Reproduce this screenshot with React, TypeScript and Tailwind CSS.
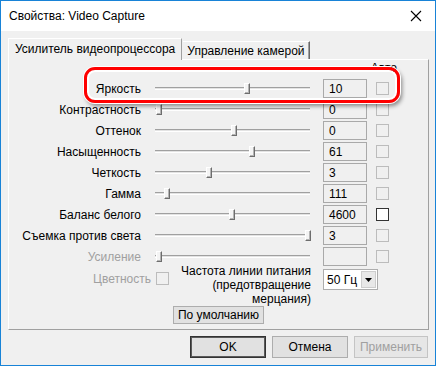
import React from 'react';

type Row = { label: string; value: string; pos: number; disabled?: boolean; white?: boolean };

// pos = thumb offset from track start, px
const rows: Row[] = [
  { label: 'Яркость', value: '10', pos: 89 },
  { label: 'Контрастность', value: '0', pos: 1 },
  { label: 'Оттенок', value: '0', pos: 76 },
  { label: 'Насыщенность', value: '61', pos: 94 },
  { label: 'Четкость', value: '3', pos: 51 },
  { label: 'Гамма', value: '111', pos: 9 },
  { label: 'Баланс белого', value: '4600', pos: 74, white: true },
  { label: 'Съемка против света', value: '3', pos: 150 },
  { label: 'Усиление', value: '', pos: 1, disabled: true },
];

function Slider({ pos }: { pos: number }) {
  return (
    <div className="relative ml-[13px] w-[155px] h-[21px] flex items-center">
      <div className="w-full h-[3px] border-t border-t-[#a0a0a0] border-b border-b-white bg-[#e3e3e3]" />
      <div
        className="absolute top-[5px] w-[6px] h-[11px] bg-[#f4f4f4] border-l border-t border-l-white border-t-white border-r border-b border-r-[#6d6d6d] border-b-[#6d6d6d] shadow-[inset_-1px_-1px_0_#b4b4b4]"
        style={{ left: pos }}
      />
    </div>
  );
}

function Check({ white }: { white?: boolean }) {
  return (
    <div
      className={
        white
          ? 'w-[13px] h-[13px] border border-[#333] bg-white'
          : 'w-[13px] h-[13px] border border-[#bcbcbc] bg-[#f0f0f0]'
      }
    />
  );
}

export default function App() {
  return (
    <div
      className="w-[436px] h-[366px] border border-[#1883d7] flex flex-col bg-[#f0f0f0] text-[12px] text-black"
      style={{ fontFamily: '"Liberation Sans", Arial, sans-serif' }}
    >
      {/* Title bar */}
      <div className="h-[30px] bg-white flex items-center justify-between pl-[8px] pr-[9px] shrink-0">
        <span className="text-[12px]">Свойства: Video Capture</span>
        <svg width="12" height="12" viewBox="0 0 12 12" className="mr-[4px]">
          <path d="M1 1 L11 11 M11 1 L1 11" stroke="#000" strokeWidth="1.1" />
        </svg>
      </div>

      <div className="flex-1 flex flex-col px-[7px] pt-[6px]">
        {/* Tabs */}
        <div className="flex items-end h-[22px] relative z-10">
          <div className="h-[22px] px-[6px] flex items-center bg-[#f0f0f0] border-l border-t border-l-white border-t-white border-r border-r-[#a0a0a0] -mb-px pb-px">
            Усилитель видеопроцессора
          </div>
          <div className="h-[18px] ml-[1px] px-[4px] flex items-center border-t border-t-white border-r border-r-[#696969] shadow-[inset_-1px_0_0_#a0a0a0]">
            Управление камерой
          </div>
        </div>

        {/* Panel */}
        <div className="relative w-[421px] h-[271px] border-l border-t border-l-white border-t-white border-r border-b border-r-[#a0a0a0] border-b-[#a0a0a0] flex flex-col">
          <div className="h-[18px] flex justify-end pr-[31px] leading-[14px]">
            <span className="mt-[1px]">Авто</span>
          </div>

          <div className="flex flex-col">
            {rows.map((r) => (
              <div key={r.label} className="h-[21px] flex items-center">
                <div className={'w-[133px] text-right pr-[1px] ' + (r.disabled ? 'text-[#a0a0a0]' : '')}>{r.label}</div>
                <div className="w-[181px]">
                  <Slider pos={r.pos} />
                </div>
                <div className="w-[44px] h-[19px] border border-[#a9a9a9] bg-[#f0f0f0] pl-[5px] flex items-center">{r.value}</div>
                <div className="ml-[9px]">
                  <Check white={r.white} />
                </div>
              </div>
            ))}
          </div>

          {/* Chroma + power line frequency */}
          <div className="flex -mt-[3px]">
            <div className="w-[160px] flex items-start justify-end pt-[8px]">
              <span className="text-[#a0a0a0] mr-[5px] leading-[14px]">Цветность</span>
              <Check />
            </div>
            <div className="w-[142px] text-right leading-[14px] whitespace-nowrap">
              Частота линии питания
              <br />
              (предотвращение
              <br />
              мерцания)
            </div>
            <div className="ml-[12px] mt-[5px] w-[55px] h-[21px] bg-white border border-[#adadad] flex items-center whitespace-nowrap">
              <span className="pl-[3px] flex-1">50 Гц</span>
              <div className="w-[15px] h-[17px] mr-[1px] bg-[#e8e8e8] border border-[#cdcdcd] flex items-center justify-center shrink-0">
                <svg width="7" height="4" viewBox="0 0 7 4">
                  <path d="M0 0 H7 L3.5 4 Z" fill="#000" />
                </svg>
              </div>
            </div>
          </div>

          <div className="flex justify-center">
            <div className="w-[91px] h-[18px] bg-[#e1e1e1] border border-[#adadad] flex items-center justify-center">
              По умолчанию
            </div>
          </div>

          {/* red highlight annotation */}
          <div className="absolute left-[75px] top-[7px] w-[316px] h-[36px] rounded-[11px] border-[3px] border-[#ff0000] shadow-[0_0_0_1px_#ffffff,inset_0_0_0_2px_#ffffff,2px_3px_4px_rgba(0,0,0,0.45)]" />
        </div>

        {/* Dialog buttons */}
        <div className="flex justify-end gap-[6px] mt-[6px]">
          <div className="w-[76px] h-[22px] bg-[#e1e1e1] border border-[#333] shadow-[inset_0_0_0_1px_#5a5a5a] flex items-center justify-center">
            OK
          </div>
          <div className="w-[76px] h-[22px] bg-[#e1e1e1] border border-[#adadad] flex items-center justify-center">
            Отмена
          </div>
          <div className="w-[74px] h-[22px] bg-[#e6e6e6] border border-[#c4c4c4] text-[#a0a0a0] flex items-center justify-center">
            Применить
          </div>
        </div>
      </div>
    </div>
  );
}
